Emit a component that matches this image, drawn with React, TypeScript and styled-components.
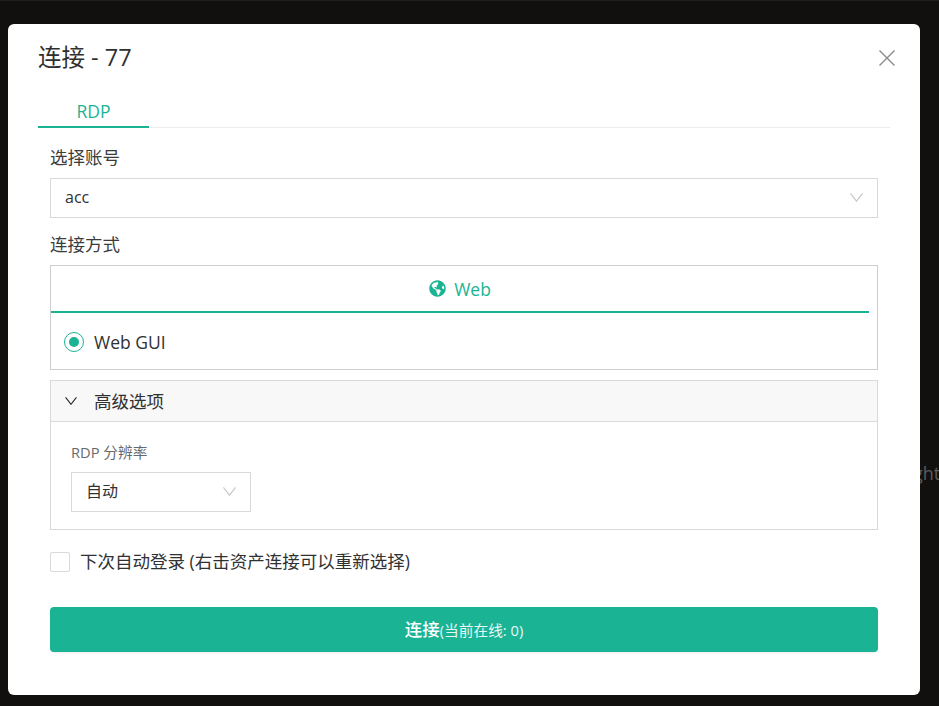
import React from 'react';
import styled, { createGlobalStyle } from 'styled-components';
import { FaGlobeAmericas } from 'react-icons/fa';

const GlobalStyle = createGlobalStyle`
  html, body {
    margin: 0;
    padding: 0;
    height: 100%;
    background: #12100e;
    overflow: hidden;
  }
  * {
    box-sizing: border-box;
  }
`;

const Backdrop = styled.div`
  position: relative;
  width: 939px;
  height: 706px;
  padding: 24px 19px 11px 8px;
  background: #12100e;
  box-shadow: inset 0 1px 0 #1f1d1b;
  font-family: "Open Sans", "Noto Sans CJK SC", sans-serif;
  color: #303133;
  overflow: hidden;
`;

const PageBehind = styled.span`
  position: absolute;
  left: 913px;
  top: 461px;
  font-size: 18px;
  line-height: 24px;
  color: #5c5c5c;
  white-space: nowrap;
`;

const Modal = styled.div`
  position: relative;
  width: 912px;
  height: 671px;
  padding: 0 30px;
  background: #fff;
  border-radius: 6px;
`;

const Header = styled.div`
  display: flex;
  align-items: center;
  justify-content: space-between;
  height: 68px;
`;

const Title = styled.h4`
  margin: 0;
  font-size: 23.5px;
  font-weight: 400;
  line-height: 66px;
  height: 68px;
  color: #2f2f2f;
`;

const CloseButton = styled.button`
  position: absolute;
  top: 26px;
  right: 25px;
  display: flex;
  width: 16px;
  height: 16px;
  padding: 0;
  border: 0;
  background: none;
`;

const TabBar = styled.div`
  display: flex;
  height: 36px;
  border-bottom: 1px solid #ececec;
`;

const Tab = styled.div`
  width: 111px;
  height: 36px;
  border-bottom: 2px solid #1ab394;
  color: #1ab394;
  font-size: 17.5px;
  line-height: 24px;
  padding-top: 7px;
  text-align: center;
`;

const Form = styled.div`
  display: flex;
  flex-direction: column;
  padding: 19px 12px 0;
`;

const FieldLabel = styled.label`
  display: block;
  height: 23px;
  margin-bottom: 8px;
  font-size: 17.5px;
  line-height: 21px;
  color: #3c3c3c;
`;

const SelectBox = styled.div<{ $width?: number }>`
  display: flex;
  align-items: center;
  justify-content: space-between;
  width: ${p => (p.$width ? `${p.$width}px` : '100%')};
  height: 40px;
  padding: 0 14px 2px;
  border: 1px solid #d9d9d9;
  background: #fff;
  font-size: 16px;
  color: #303133;
`;

const AccountSelect = styled(SelectBox)`
  margin-bottom: 16px;
`;

const SelectValue = styled.span`
  margin-bottom: 2px;
`;

const Method = styled.div`
  height: 105px;
  margin-bottom: 10px;
  border: 1px solid #cfcfcf;
`;

const MethodTab = styled.div`
  display: flex;
  align-items: center;
  justify-content: center;
  gap: 8px;
  width: 818px;
  height: 47px;
  border-bottom: 2px solid #1ab394;
  color: #1ab394;
  font-size: 17.5px;
`;

const RadioRow = styled.div`
  display: flex;
  align-items: center;
  gap: 10px;
  height: 56px;
  padding: 2px 0 0 13px;
  font-size: 17.5px;
  color: #303133;
`;

const Radio = styled.span`
  display: flex;
  align-items: center;
  justify-content: center;
  width: 20px;
  height: 20px;
  border: 1px solid #1ab394;
  border-radius: 50%;

  &::after {
    content: '';
    width: 10px;
    height: 10px;
    border-radius: 50%;
    background: #1ab394;
  }
`;

const Advanced = styled.div`
  height: 150px;
  border: 1px solid #d9d9d9;
`;

const AdvancedHeader = styled.div`
  display: flex;
  align-items: center;
  gap: 17px;
  height: 41px;
  padding: 0 0 1px 14px;
  background: #f8f8f8;
  border-bottom: 1px solid #d9d9d9;
  font-size: 17.5px;
  color: #303133;
`;

const AdvancedBody = styled.div`
  padding: 21px 20px 0;
`;

const SmallLabel = styled.div`
  height: 20px;
  margin-bottom: 9px;
  font-size: 14.7px;
  line-height: 18px;
  color: #676a6c;
`;

const CheckRow = styled.div`
  display: flex;
  align-items: center;
  gap: 11px;
  height: 22px;
  margin-top: 21px;
  font-size: 17.5px;
  line-height: 20px;
  color: #303133;
`;

const CheckBox = styled.span`
  width: 20px;
  height: 20px;
  border: 1px solid #d9d9d9;
  border-radius: 2px;
  background: #fff;
`;

const CheckText = styled.span`
  margin-bottom: 2px;
  margin-left: -1px;
`;

const ConnectButton = styled.button`
  width: 100%;
  height: 45px;
  margin-top: 34px;
  padding: 0 0 2px;
  border: 0;
  border-radius: 4px;
  background: #1ab394;
  color: #fff;
  font-family: inherit;
  font-size: 17.5px;
  font-weight: 500;
  box-shadow: 0 1px 2px rgba(0, 0, 0, 0.08);
`;

const OnlineCount = styled.span`
  font-size: 14.7px;
  font-weight: 400;
  color: #e8f7f4;
`;

const Chevron: React.FC<{ color?: string; width?: number; height?: number }> = ({
  color = '#c8c8c8',
  width = 13,
  height = 9,
}) => (
  <svg width={width} height={height} viewBox="0 0 13 9" fill="none" stroke={color} strokeWidth="1.2">
    <path d="M0.4 0.4 L6.5 8.2 L12.6 0.4" />
  </svg>
);

export default function App() {
  return (
    <Backdrop>
      <GlobalStyle />
      <PageBehind>ght</PageBehind>
      <Modal>
        <Header>
          <Title>连接 - 77</Title>
          <CloseButton aria-label="close">
            <svg width="16" height="16" viewBox="0 0 16 16" stroke="#8a8a8a" strokeWidth="1.4" fill="none">
              <path d="M0.5 0.5 L15.5 15.5 M15.5 0.5 L0.5 15.5" />
            </svg>
          </CloseButton>
        </Header>
        <TabBar>
          <Tab>RDP</Tab>
        </TabBar>
        <Form>
          <FieldLabel>选择账号</FieldLabel>
          <AccountSelect>
            acc
            <Chevron />
          </AccountSelect>
          <FieldLabel>连接方式</FieldLabel>
          <Method>
            <MethodTab>
              <FaGlobeAmericas size={17} />
              Web
            </MethodTab>
            <RadioRow>
              <Radio />
              Web GUI
            </RadioRow>
          </Method>
          <Advanced>
            <AdvancedHeader>
              <Chevron color="#222" width={12} height={8} />
              高级选项
            </AdvancedHeader>
            <AdvancedBody>
              <SmallLabel>RDP 分辨率</SmallLabel>
              <SelectBox $width={180}>
                <SelectValue>自动</SelectValue>
                <Chevron />
              </SelectBox>
            </AdvancedBody>
          </Advanced>
          <CheckRow>
            <CheckBox />
            <CheckText>下次自动登录 (右击资产连接可以重新选择)</CheckText>
          </CheckRow>
          <ConnectButton>
            连接<OnlineCount>(当前在线: 0)</OnlineCount>
          </ConnectButton>
        </Form>
      </Modal>
    </Backdrop>
  );
}
